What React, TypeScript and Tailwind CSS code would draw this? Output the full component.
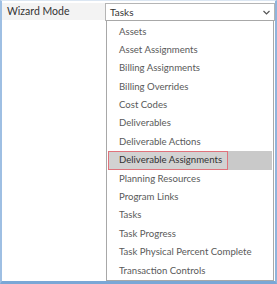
import React from "react";

const items = [
  "Assets",
  "Asset Assignments",
  "Billing Assignments",
  "Billing Overrides",
  "Cost Codes",
  "Deliverables",
  "Deliverable Actions",
  "Deliverable Assignments",
  "Planning Resources",
  "Program Links",
  "Tasks",
  "Task Progress",
  "Task Physical Percent Complete",
  "Transaction Controls",
];

export default function App() {
  return (
    <div
      className="w-[277px] h-[284px] bg-white relative overflow-hidden"
      style={{ fontFamily: 'Lato, "Liberation Sans", sans-serif' }}
    >
      <div className="absolute inset-0 border-l-2 border-r-2 border-t border-b-[3px] border-l-[#9ebfe3] border-r-[#8fb4dc] border-t-[#dbe6f2] border-b-[#7aa7d6]" />
      <div className="flex pt-[3px] pl-[2px]">
        <div className="w-[103px] h-[17px] bg-[#f3f3f3] text-[10.5px] leading-[17px] text-[#333] pl-[5px]">
          Wizard Mode
        </div>
        <div className="relative w-[170px] h-[18px] border border-[#b5b5b5] bg-white text-[10px] leading-[16px] text-[#333] pl-[4px]">
          Tasks
          <svg className="absolute right-[4px] top-[6px]" width="7" height="5" viewBox="0 0 7 5">
            <path d="M0.5 1 L3.5 4 L6.5 1" fill="none" stroke="#555" strokeWidth="1.2" />
          </svg>
        </div>
      </div>
      <div className="absolute left-[106px] top-[20px] w-[168px] h-[261px] border border-[#a8a8a8] bg-white pt-[1.5px] px-[1px]">
        {items.map((it) => {
          const sel = it === "Deliverable Assignments";
          return (
            <div
              key={it}
              className={
                "h-[18.4px] flex items-center text-[9.6px] whitespace-nowrap " +
                (sel ? "bg-[#c9c9c9] text-[#333]" : "text-[#5a5a5a]")
              }
            >
              {sel ? (
                <span className="h-full flex items-center pl-[10px] pr-[5px] border border-[#e0737c] bg-[#d2d2d2]">
                  {it}
                </span>
              ) : (
                <span className="pl-[11px]">{it}</span>
              )}
            </div>
          );
        })}
      </div>
    </div>
  );
}
